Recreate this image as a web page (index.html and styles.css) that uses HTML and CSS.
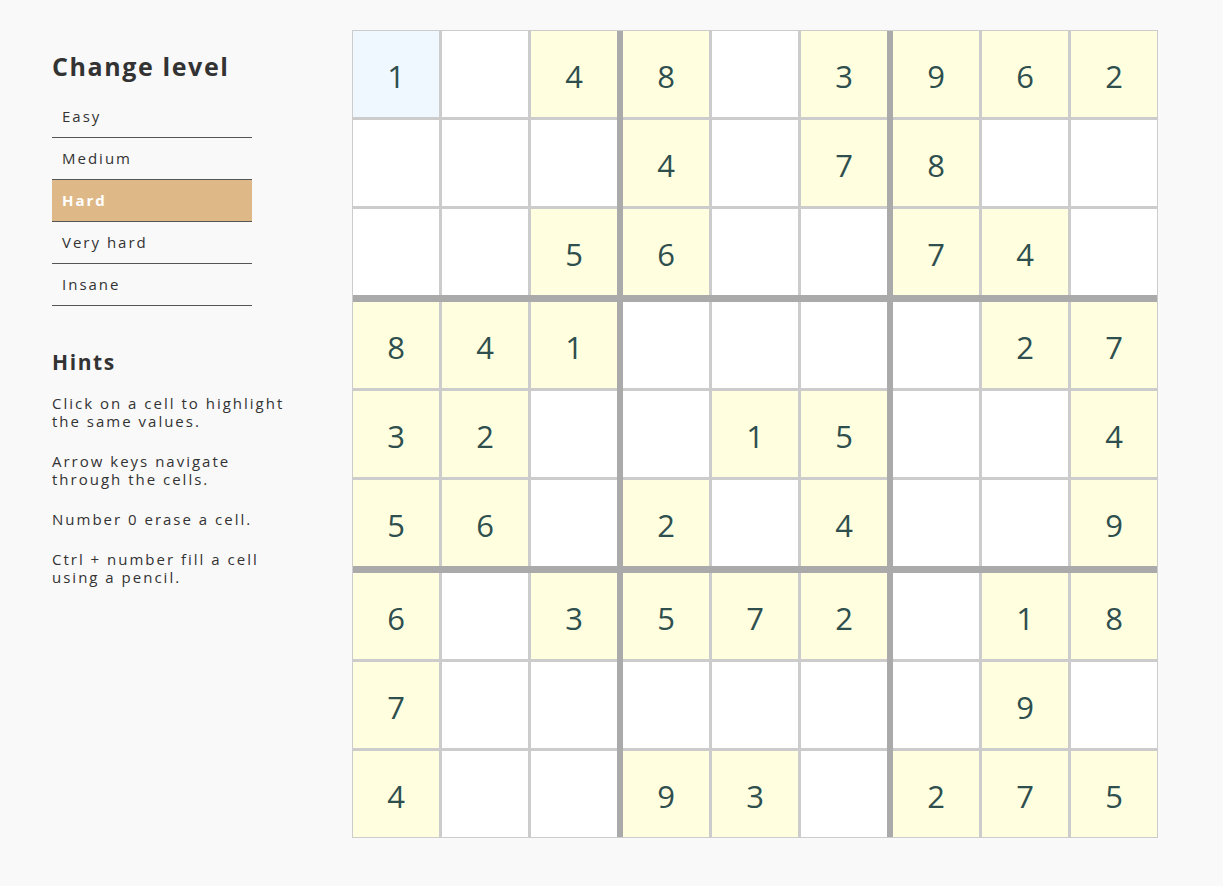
FILE: index.html
```html
<!DOCTYPE html>
<html lang="en">
<head>
<meta charset="utf-8">
<title>Sudoku</title>
<link rel="stylesheet" href="styles.css">
</head>
<body>
<div class="app">
  <aside class="sidebar">
    <h2 class="title">Change level</h2>
    <ul class="levels">
      <li class="level">Easy</li>
      <li class="level">Medium</li>
      <li class="level active">Hard</li>
      <li class="level">Very hard</li>
      <li class="level">Insane</li>
    </ul>
    <h3 class="subtitle">Hints</h3>
    <p class="hint">Click on a cell to highlight<br>the same values.</p>
    <p class="hint">Arrow keys navigate<br>through the cells.</p>
    <p class="hint">Number 0 erase a cell.</p>
    <p class="hint">Ctrl + number fill a cell<br>using a pencil.</p>
  </aside>
  <main class="board">
    <div class="box">
      <div class="cell selected">1</div><div class="cell"></div><div class="cell given">4</div>
      <div class="cell"></div><div class="cell"></div><div class="cell"></div>
      <div class="cell"></div><div class="cell"></div><div class="cell given">5</div>
    </div>
    <div class="box">
      <div class="cell given">8</div><div class="cell"></div><div class="cell given">3</div>
      <div class="cell given">4</div><div class="cell"></div><div class="cell given">7</div>
      <div class="cell given">6</div><div class="cell"></div><div class="cell"></div>
    </div>
    <div class="box">
      <div class="cell given">9</div><div class="cell given">6</div><div class="cell given">2</div>
      <div class="cell given">8</div><div class="cell"></div><div class="cell"></div>
      <div class="cell given">7</div><div class="cell given">4</div><div class="cell"></div>
    </div>
    <div class="box">
      <div class="cell given">8</div><div class="cell given">4</div><div class="cell given">1</div>
      <div class="cell given">3</div><div class="cell given">2</div><div class="cell"></div>
      <div class="cell given">5</div><div class="cell given">6</div><div class="cell"></div>
    </div>
    <div class="box">
      <div class="cell"></div><div class="cell"></div><div class="cell"></div>
      <div class="cell"></div><div class="cell given">1</div><div class="cell given">5</div>
      <div class="cell given">2</div><div class="cell"></div><div class="cell given">4</div>
    </div>
    <div class="box">
      <div class="cell"></div><div class="cell given">2</div><div class="cell given">7</div>
      <div class="cell"></div><div class="cell"></div><div class="cell given">4</div>
      <div class="cell"></div><div class="cell"></div><div class="cell given">9</div>
    </div>
    <div class="box">
      <div class="cell given">6</div><div class="cell"></div><div class="cell given">3</div>
      <div class="cell given">7</div><div class="cell"></div><div class="cell"></div>
      <div class="cell given">4</div><div class="cell"></div><div class="cell"></div>
    </div>
    <div class="box">
      <div class="cell given">5</div><div class="cell given">7</div><div class="cell given">2</div>
      <div class="cell"></div><div class="cell"></div><div class="cell"></div>
      <div class="cell given">9</div><div class="cell given">3</div><div class="cell"></div>
    </div>
    <div class="box">
      <div class="cell"></div><div class="cell given">1</div><div class="cell given">8</div>
      <div class="cell"></div><div class="cell given">9</div><div class="cell"></div>
      <div class="cell given">2</div><div class="cell given">7</div><div class="cell given">5</div>
    </div>
  </main>
</div>
</body>
</html>
```
FILE: styles.css
```css
* { box-sizing: border-box; }

html, body {
  margin: 0;
  padding: 0;
  background: #f9f9f9;
  font-family: "Open Sans", "Noto Sans", "DejaVu Sans", sans-serif;
  color: #333;
}

.app {
  display: flex;
  align-items: flex-start;
  padding: 30px 0 0 52px;
}

.sidebar {
  width: 260px;
  margin-right: 40px;
}

.title {
  margin: 20px 0 14px;
  font-size: 25px;
  line-height: 32px;
  font-weight: 700;
  letter-spacing: 1.6px;
  color: #333;
}

.levels {
  list-style: none;
  margin: 0;
  padding: 0;
  width: 200px;
}

.level {
  height: 42px;
  line-height: 41px;
  padding: 0 10px;
  font-size: 15px;
  letter-spacing: 2px;
  color: #333;
  border-bottom: 1px solid #555;
}

.level.active {
  background: #deb887;
  color: #fff;
  font-weight: 700;
}

.subtitle {
  margin: 42px 0 18px;
  font-size: 21px;
  line-height: 28px;
  font-weight: 700;
  letter-spacing: 1.6px;
  color: #333;
}

.hint {
  margin: 0 0 22px;
  font-size: 15px;
  line-height: 18px;
  letter-spacing: 2px;
  color: #333;
}

.board {
  display: grid;
  grid-template-columns: repeat(3, 264px);
  column-gap: 6px;
  row-gap: 7px;
  background: #aaa;
  border: 1px solid #ccc;
}

.box {
  display: grid;
  grid-template-columns: repeat(3, 86px);
  grid-auto-rows: 86px;
  gap: 3px;
  background: #ccc;
}

.cell {
  background: #fff;
  display: flex;
  align-items: center;
  justify-content: center;
  padding-top: 3px;
  font-size: 31px;
  color: #2f4f4f;
}

.cell.given { background: #ffffe0; }
.cell.selected { background: #f0f8ff; }
```
